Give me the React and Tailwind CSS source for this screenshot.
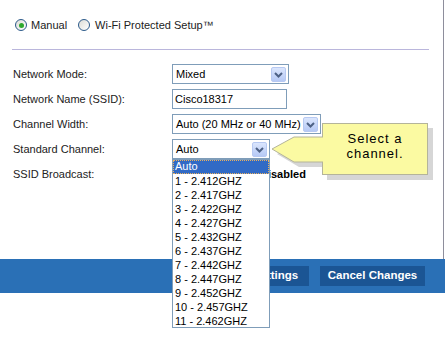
import React from "react";

const font = { fontFamily: '"Liberation Sans", Arial, sans-serif' };

function Chevron() {
  return (
    <span className="absolute right-[2px] top-[2px] flex h-[15px] w-[15px] items-center justify-center rounded-[2px] border border-[#b7c9f2] bg-gradient-to-b from-[#dbe6fd] to-[#b6c9f5]">
      <svg width="9" height="6" viewBox="0 0 9 6">
        <path d="M1 1 L4.5 4.5 L8 1" fill="none" stroke="#4d6185" strokeWidth="2" />
      </svg>
    </span>
  );
}

function Select({ w, value }) {
  return (
    <div
      className="relative flex h-[20px] items-center border border-[#7f9db9] bg-white pl-[3px] text-[11px] text-black"
      style={{ width: w }}
    >
      {value}
      <Chevron />
    </div>
  );
}

function Radio({ checked }) {
  return (
    <span className="flex h-[12px] w-[12px] items-center justify-center rounded-full border border-[#2c5a8a] bg-gradient-to-br from-[#dcdcd6] to-white">
      {checked && <span className="h-[5px] w-[5px] rounded-full bg-[#2ea82e]" />}
    </span>
  );
}

function Row({ label, children }) {
  return (
    <div className="mb-[5px] flex h-[20px] items-center">
      <div className="w-[172px] shrink-0 pl-[13px] text-[11px] text-[#222]">{label}</div>
      {children}
    </div>
  );
}

const channels = [
  "Auto",
  "1 - 2.412GHZ",
  "2 - 2.417GHZ",
  "3 - 2.422GHZ",
  "4 - 2.427GHZ",
  "5 - 2.432GHZ",
  "6 - 2.437GHZ",
  "7 - 2.442GHZ",
  "8 - 2.447GHZ",
  "9 - 2.452GHZ",
  "10 - 2.457GHZ",
  "11 - 2.462GHZ",
];

export default function App() {
  return (
    <div className="relative h-[340px] w-[445px] overflow-hidden bg-white" style={font}>
      <div className="h-[259px] w-[444px] border-r border-[#8e8e9c] pt-[18px]">
        <div className="flex h-[14px] items-center pl-[15px] text-[11px] text-[#222]">
          <Radio checked />
          <span className="ml-[4px]">Manual</span>
          <span className="ml-[11px]">
            <Radio />
          </span>
          <span className="ml-[5px]">Wi-Fi Protected Setup™</span>
        </div>
        <div className="ml-[12px] mt-[17px] w-[417px] border-t border-[#bab6dc]" />
        <div className="mt-[14px]">
          <Row label="Network Mode:">
            <Select w={117} value="Mixed" />
          </Row>
          <Row label="Network Name (SSID):">
            <div className="flex h-[20px] w-[115px] items-center border border-[#7f9db9] bg-white pl-[2px] text-[11px] text-black">
              Cisco18317
            </div>
          </Row>
          <Row label="Channel Width:">
            <Select w={149} value="Auto (20 MHz or 40 MHz)" />
          </Row>
          <Row label="Standard Channel:">
            <Select w={98} value="Auto" />
          </Row>
          <Row label="SSID Broadcast:">
            <span className="ml-[88px] text-[11px] font-bold text-black">Disabled</span>
          </Row>
        </div>
      </div>

      <div className="flex h-[34px] w-[445px] items-center justify-end gap-[11px] bg-[#2a70b6] pr-[20px]">
        <div className="flex h-[20px] w-[97px] items-center justify-center bg-[#1b5594] text-[11.5px] font-bold text-white">
          Save Settings
        </div>
        <div className="flex h-[20px] w-[105px] items-center justify-center bg-[#1b5594] text-[11.5px] font-bold text-white">
          Cancel Changes
        </div>
      </div>

      {/* Dropdown list */}
      <div className="absolute left-[172px] top-[159px] h-[169px] w-[98px] border border-[#7f9db9] bg-white text-[11px] text-black">
        {channels.map((c, i) => (
          <div
            key={c}
            className={
              i === 0
                ? "h-[14px] bg-[#316ac5] pl-[2px] leading-[13px] text-white outline-1 outline-dotted outline-[#e8b060] -outline-offset-1"
                : "h-[14px] pl-[2px] leading-[14px]"
            }
          >
            {c}
          </div>
        ))}
      </div>

      {/* Callout shadow for arrow */}
      <svg className="absolute left-0 top-0" width="445" height="340">
        <polygon points="277,154 299,142 328,142 328,167 299,167" fill="#d6d6d6" />
      </svg>
      <div className="absolute left-[322px] top-[123px] h-[52px] w-[106px] border border-[#b4b49a] bg-[#fbfaa2] pt-[7px] text-center text-[13px] leading-[15px] tracking-[1px] text-black shadow-[5px_5px_0_#d6d6d6]">
        Select a
        <br />
        channel.
      </div>
      <svg className="absolute left-0 top-0" width="445" height="340">
        <polygon points="272,149 294,137 323.5,137 323.5,162 294,162" fill="#fbfaa2" />
        <polyline points="323,137 294,137 272,149 294,162 323,162" fill="none" stroke="#b4b49a" strokeWidth="1" />
      </svg>
    </div>
  );
}
